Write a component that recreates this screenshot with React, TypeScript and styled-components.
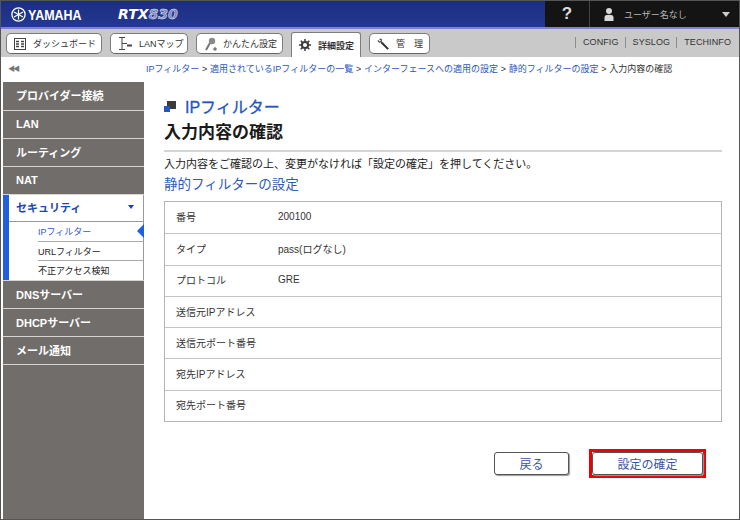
import React from 'react';
import styled, { createGlobalStyle } from 'styled-components';

const GlobalStyle = createGlobalStyle`
  html, body { margin: 0; padding: 0; background: #fff; }
  body {
    font-family: "Liberation Sans", "Noto Sans CJK JP", sans-serif;
    color: #222;
  }
  * { box-sizing: border-box; }
`;

const Page = styled.div`
  width: 740px;
  height: 520px;
  display: flex;
  flex-direction: column;
  overflow: hidden;
  border: 1px solid #555;
  background: #fff;
`;

const Header = styled.header`
  height: 28px;
  flex: none;
  display: flex;
  background: linear-gradient(180deg, #1b2e80, #243893);
  border-bottom: 2px solid #7f83cf;
  color: #fff;
`;

const Brand = styled.div`
  display: flex;
  align-items: center;
  gap: 2px;
  width: 117px;
  padding-left: 10px;
`;

const BrandName = styled.span`
  display: inline-block;
  font-size: 15px;
  font-weight: 700;
  transform: scaleX(0.83);
  transform-origin: left center;
`;

const Model = styled.div`
  flex: 1;
  display: flex;
  align-items: center;
  font-family: "DejaVu Sans", sans-serif;
  font-size: 14px;
  font-weight: 700;
  font-style: italic;
  color: #fff;
`;

const ModelNumber = styled.span`
  color: #7a84bd;
  -webkit-text-stroke: 0.5px #e6e8f5;
`;

const Help = styled.div`
  width: 44px;
  background: #141414;
  display: flex;
  align-items: center;
  justify-content: center;
  font-size: 17px;
  font-weight: 700;
  color: #dcdcdc;
`;

const UserBox = styled.div`
  width: 150px;
  background: #141414;
  border-left: 1px solid #444;
  display: flex;
  align-items: center;
  padding-left: 14px;
  font-size: 9px;
  color: #b5b5b5;
`;

const UserName = styled.span`
  flex: 1;
  margin-left: 10px;
`;

const Caret = styled.span<{ $color: string; $size: number; $right: number }>`
  width: 0;
  height: 0;
  margin-right: ${p => p.$right}px;
  border-left: ${p => p.$size}px solid transparent;
  border-right: ${p => p.$size}px solid transparent;
  border-top: ${p => p.$size + 1}px solid ${p => p.$color};
`;

const Toolbar = styled.div`
  height: 28px;
  flex: none;
  display: flex;
  align-items: flex-end;
  gap: 8px;
  padding-left: 5px;
  background: #c9c9c9;
`;

const Tab = styled.div<{ $active?: boolean; $width: number; $gap: number }>`
  width: ${p => p.$width}px;
  height: ${p => (p.$active ? 25 : 21)}px;
  margin-bottom: ${p => (p.$active ? 0 : 3)}px;
  display: flex;
  align-items: center;
  gap: ${p => p.$gap}px;
  padding-left: 7px;
  font-size: 9px;
  white-space: nowrap;
  font-weight: ${p => (p.$active ? 700 : 400)};
  color: #333;
  background: #fff;
  border: 1px solid #7d7d7d;
  border-bottom: ${p => (p.$active ? 'none' : '1px solid #666')};
  border-radius: ${p => (p.$active ? '3px 3px 0 0' : '5px')};
`;

const ToolLinks = styled.div`
  margin-left: auto;
  align-self: center;
  display: flex;
  align-items: center;
  margin-bottom: 2px;
  padding-right: 2px;
  font-size: 9px;
  letter-spacing: 0.1px;
  color: #333;
`;

const ToolLink = styled.span`
  padding: 0 6px 0 7px;
  border-left: 1px solid #8c8c8c;
  line-height: 11px;
`;

const Body = styled.div`
  flex: 1;
  display: flex;
  min-height: 0;
`;

const Side = styled.aside`
  width: 143px;
  flex: none;
  display: flex;
  flex-direction: column;
  padding-left: 2px;
`;

const Collapse = styled.div`
  height: 25px;
  flex: none;
  padding: 6px 0 0 5px;
  font-size: 7px;
  letter-spacing: -2px;
  color: #777;
`;

const SideMenu = styled.nav`
  flex: 1;
  display: flex;
  flex-direction: column;
  gap: 1px;
  background: #d5d5d5;
`;

const SideItem = styled.div`
  height: 27px;
  flex: none;
  display: flex;
  align-items: center;
  padding: 0 0 2px 13px;
  background: #716d6b;
  color: #fff;
  font-size: 11px;
  font-weight: 700;
  &:first-child { height: 28px; }
`;

const SideFill = styled.div`
  flex: 1;
  background: #716d6b;
`;

const OpenGroup = styled.div`
  flex: none;
  padding-bottom: 1px;
  background: #fff;
  border-left: 6px solid #1f5fe6;
  border-right: 1px solid #999;
`;

const OpenHead = styled.div`
  height: 27px;
  display: flex;
  align-items: center;
  justify-content: space-between;
  padding: 0 0 2px 7px;
  font-size: 11px;
  font-weight: 700;
  color: #1e46b0;
  border-bottom: 1px solid #999;
`;

const SubItem = styled.div<{ $active?: boolean }>`
  position: relative;
  height: 19px;
  margin-left: 29px;
  display: flex;
  align-items: center;
  font-size: 9px;
  color: ${p => (p.$active ? '#2f5cc8' : '#222')};
  & + & { border-top: 1px solid #aaa; }
`;

const SubMarker = styled.span`
  position: absolute;
  right: -1px;
  top: 2px;
  width: 0;
  height: 0;
  border-top: 7px solid transparent;
  border-bottom: 7px solid transparent;
  border-right: 7px solid #1f5fe6;
`;

const Main = styled.main`
  flex: 1;
  display: flex;
  flex-direction: column;
  min-width: 0;
`;

const Crumbs = styled.div`
  height: 25px;
  flex: none;
  padding: 5px 0 0 2px;
  font-size: 9px;
  word-spacing: 0.25px;
  color: #333;
  white-space: nowrap;
`;

const Crumb = styled.span`
  color: #2b58bd;
`;

const Content = styled.div`
  flex: 1;
  padding: 14px 17px 0 20px;
  background: #fff;
`;

const TitleRow = styled.div`
  display: flex;
  align-items: center;
  gap: 9px;
  height: 20px;
  font-size: 16px;
  color: #2456c0;
  -webkit-text-stroke: 0.3px #2456c0;
`;

const Heading = styled.h1`
  margin: 4px 0 0;
  height: 32px;
  font-size: 17px;
  font-weight: 700;
  color: #1a1a1a;
  line-height: 26px;
  border-bottom: 2px solid #d4d4d4;
`;

const Lead = styled.p`
  margin: 5px 0 0;
  font-size: 11px;
  line-height: 14px;
  color: #222;
`;

const SubHeading = styled.h2`
  margin: 4px 0 0;
  font-size: 13.5px;
  line-height: 20px;
  font-weight: 400;
  color: #2f5bb5;
`;

const Table = styled.div`
  margin-top: 6px;
  border: 1px solid #b5b5b5;
`;

const Row = styled.div`
  height: 31.3px;
  display: flex;
  align-items: center;
  padding: 0 0 2px 11px;
  font-size: 10px;
  color: #333;
  & + & { border-top: 1px solid #c4c4c4; }
`;

const RowLabel = styled.span`
  width: 102px;
`;

const Actions = styled.div`
  margin-top: 27px;
  display: flex;
  justify-content: flex-end;
  align-items: center;
  gap: 20px;
  padding-right: 16px;
`;

const Button = styled.div<{ $width: number }>`
  width: ${p => p.$width}px;
  height: 23px;
  display: flex;
  align-items: center;
  justify-content: center;
  background: #fff;
  border: 1px solid #555;
  border-radius: 3px;
  box-shadow: 1px 1px 1px #999;
  font-size: 12px;
  color: #3a55a0;
`;

const RedFrame = styled.div`
  border: 3px solid #f00000;
  height: 29px;
`;

const TitleIcon = () => (
  <svg width="12" height="11" viewBox="0 0 12 11">
    <rect x="3" y="0" width="9" height="8" fill="#3a3a3a" />
    <rect x="0" y="5" width="6" height="6" fill="#2456c0" />
  </svg>
);

const LogoIcon = () => (
  <svg width="15" height="15" viewBox="0 0 15 15" fill="none" stroke="#fff">
    <circle cx="7.5" cy="7.5" r="6.6" strokeWidth="1.3" />
    <path d="M7.5 2.5v10M3 5l9 5M12 5l-9 5" strokeWidth="1.2" />
  </svg>
);

const UserIcon = () => (
  <svg width="10" height="13" viewBox="0 0 10 13" fill="#d8d8d8">
    <circle cx="5" cy="3" r="3" />
    <path d="M0.5 13V9.5C0.5 7.5 2 6.8 5 6.8s4.5 0.7 4.5 2.7V13z" />
  </svg>
);

const GridIcon = () => (
  <svg width="12" height="12" viewBox="0 0 12 12" fill="none" stroke="#444">
    <rect x="0.5" y="0.5" width="11" height="11" />
    <path d="M2 3.5h3M7 3.5h3M2 6h3M7 6h3M2 8.5h3M7 8.5h3" strokeWidth="1.3" />
  </svg>
);

const MapIcon = () => (
  <svg width="15" height="15" viewBox="0 0 15 15" fill="none" stroke="#444">
    <path d="M1 1.5h6M4 1.5v12M1 13.5h6M4 7.5h5" />
    <path d="M9 9.5h5" strokeWidth="2" />
  </svg>
);

const WandIcon = () => (
  <svg width="14" height="16" viewBox="0 0 14 16" fill="none">
    <circle cx="8" cy="5" r="3.2" fill="#8a8a8a" />
    <path d="M6 7L2 14" stroke="#777" strokeWidth="2" />
    <path d="M11 11v4M9 13h4" stroke="#555" />
  </svg>
);

const GearIcon = () => (
  <svg width="12" height="12" viewBox="0 0 14 14">
    <circle cx="7" cy="7" r="3.6" fill="none" stroke="#3c3c3c" strokeWidth="2.4" />
    <path d="M7 0v3M7 11v3M0 7h3M11 7h3M2 2l2 2M10 10l2 2M12 2l-2 2M4 10l-2 2" stroke="#3c3c3c" strokeWidth="1.8" />
  </svg>
);

const WrenchIcon = () => (
  <svg width="12" height="12" viewBox="0 0 14 14" fill="none">
    <path d="M5 5l8 8" stroke="#333" strokeWidth="2.4" />
    <path d="M1 3l2 2 2-1 0-2-2-1" stroke="#555" strokeWidth="1.6" />
  </svg>
);

const rows = [
  ['番号', '200100'],
  ['タイプ', 'pass(ログなし)'],
  ['プロトコル', 'GRE'],
  ['送信元IPアドレス', ''],
  ['送信元ポート番号', ''],
  ['宛先IPアドレス', ''],
  ['宛先ポート番号', ''],
];

const App: React.FC = () => (
  <Page>
    <GlobalStyle />
    <Header>
      <Brand>
        <LogoIcon />
        <BrandName>YAMAHA</BrandName>
      </Brand>
      <Model>RTX<ModelNumber>830</ModelNumber></Model>
      <Help>?</Help>
      <UserBox>
        <UserIcon />
        <UserName>ユーザー名なし</UserName>
        <Caret $color="#ccc" $size={4} $right={9} />
      </UserBox>
    </Header>
    <Toolbar>
      <Tab $width={96} $gap={7}><GridIcon />ダッシュボード</Tab>
      <Tab $width={78} $gap={6}><MapIcon />LANマップ</Tab>
      <Tab $width={87} $gap={5}><WandIcon />かんたん設定</Tab>
      <Tab $active $width={70} $gap={7}><GearIcon />詳細設定</Tab>
      <Tab $width={61} $gap={7}><WrenchIcon />管　理</Tab>
      <ToolLinks>
        <ToolLink>CONFIG</ToolLink>
        <ToolLink>SYSLOG</ToolLink>
        <ToolLink>TECHINFO</ToolLink>
      </ToolLinks>
    </Toolbar>
    <Body>
      <Side>
        <Collapse>◀◀</Collapse>
        <SideMenu>
          <SideItem>プロバイダー接続</SideItem>
          <SideItem>LAN</SideItem>
          <SideItem>ルーティング</SideItem>
          <SideItem>NAT</SideItem>
          <OpenGroup>
            <OpenHead>
              セキュリティ
              <Caret $color="#1e46b0" $size={3} $right={9} />
            </OpenHead>
            <SubItem $active>IPフィルター<SubMarker /></SubItem>
            <SubItem>URLフィルター</SubItem>
            <SubItem>不正アクセス検知</SubItem>
          </OpenGroup>
          <SideItem>DNSサーバー</SideItem>
          <SideItem>DHCPサーバー</SideItem>
          <SideItem>メール通知</SideItem>
          <SideFill />
        </SideMenu>
      </Side>
      <Main>
        <Crumbs>
          <Crumb>IPフィルター</Crumb> &gt; <Crumb>適用されているIPフィルターの一覧</Crumb> &gt; <Crumb>インターフェースへの適用の設定</Crumb> &gt; <Crumb>静的フィルターの設定</Crumb> &gt; 入力内容の確認
        </Crumbs>
        <Content>
          <TitleRow><TitleIcon />IPフィルター</TitleRow>
          <Heading>入力内容の確認</Heading>
          <Lead>入力内容をご確認の上、変更がなければ「設定の確定」を押してください。</Lead>
          <SubHeading>静的フィルターの設定</SubHeading>
          <Table>
            {rows.map(([label, value]) => (
              <Row key={label}>
                <RowLabel>{label}</RowLabel>
                {value}
              </Row>
            ))}
          </Table>
          <Actions>
            <Button $width={75}>戻る</Button>
            <RedFrame>
              <Button $width={111}>設定の確定</Button>
            </RedFrame>
          </Actions>
        </Content>
      </Main>
    </Body>
  </Page>
);

export default App;
